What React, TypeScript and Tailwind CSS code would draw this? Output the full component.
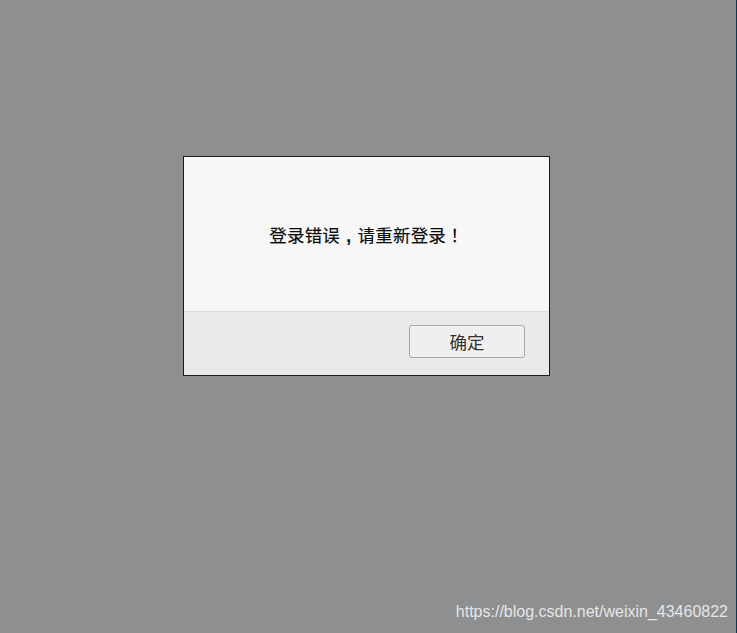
import React from 'react';

const App = () => {
    return (
        <div className="w-[737px] h-[633px] bg-[#8e8f90] flex flex-col relative overflow-hidden font-['Liberation_Sans','Noto_Sans_CJK_SC',sans-serif]">
            <div className="pt-[156px] pl-[183px]">
                <div className="w-[367px] h-[220px] border border-[#1c1c1c] bg-[#f7f7f7] flex flex-col">
                    <div className="h-[154px] flex items-center justify-center pt-[4px]">
                        <p className="text-[17.5px] text-[#0a0a0a] font-normal tracking-[0.2px] font-['Noto_Sans_CJK_SC',sans-serif] [-webkit-text-stroke:0.15px_#0a0a0a]">
                            登录错误<span className="inline-block w-[1em] text-center font-['Liberation_Sans',sans-serif] font-bold">,</span>请重新登录<span className="font-['Noto_Sans_CJK_TC',sans-serif]">！</span>
                        </p>
                    </div>
                    <div className="flex-1 bg-[#e9e9e9] border-t border-[#dcdcdc] flex justify-end pt-[13px] pr-[24px]">
                        <button className="w-[116px] h-[33px] border border-[#a9a9a9] rounded-[3px] bg-[#efefef] text-[17.5px] text-[#333] pt-[2px] font-['Noto_Sans_CJK_SC',sans-serif]">确定</button>
                    </div>
                </div>
            </div>
            <div className="absolute right-[9px] bottom-[9px] text-[16px] text-[#e6e6e6] font-['Liberation_Sans',sans-serif]">https://blog.csdn.net/weixin_43460822</div>
            <div className="absolute right-0 top-0 w-px h-full bg-[#0b3552]"></div>
        </div>
    );
};

export default App;
